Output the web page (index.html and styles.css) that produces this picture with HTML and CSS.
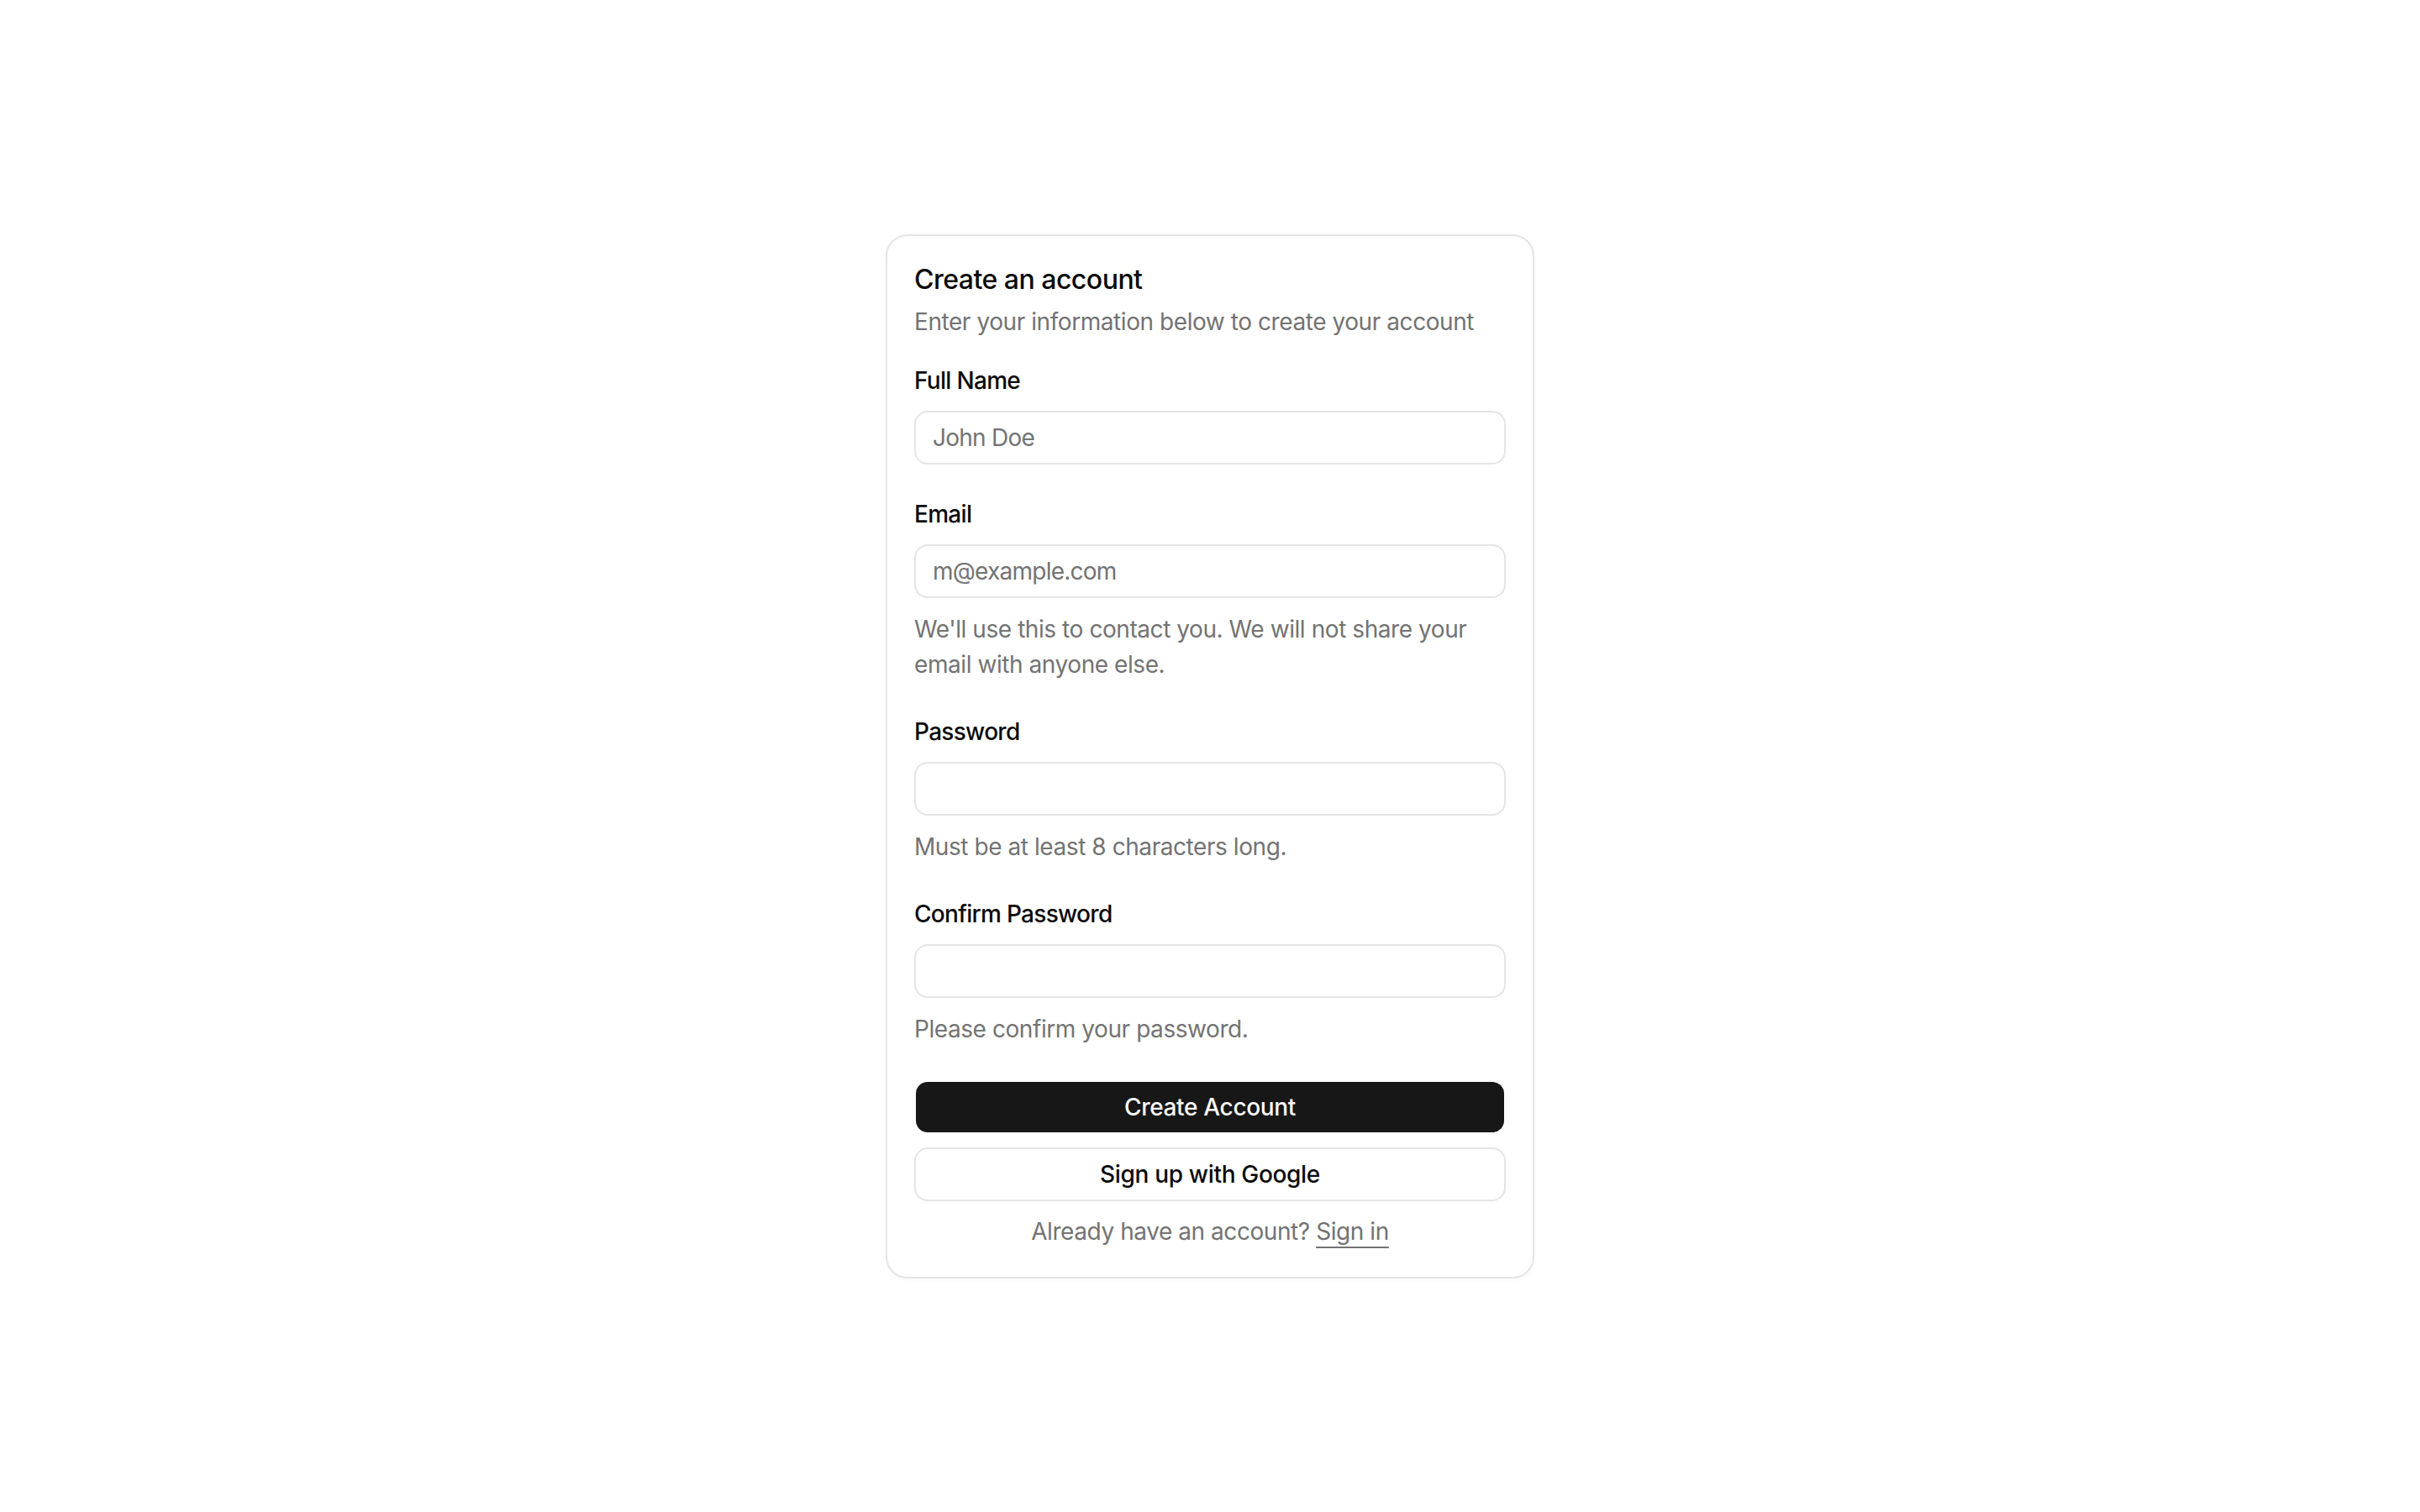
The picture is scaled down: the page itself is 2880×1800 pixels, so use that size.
FILE: index.html
```html
<!DOCTYPE html>
<html lang="en">
<head>
<meta charset="utf-8">
<title>Create an account</title>
<link rel="stylesheet" href="styles.css">
</head>
<body>
<main class="page">
  <section class="card">
    <header class="card-header">
      <h1 class="card-title">Create an account</h1>
      <p class="card-desc">Enter your information below to create your account</p>
    </header>
    <form class="form">
      <div class="field">
        <label class="label" for="name">Full Name</label>
        <input class="input" id="name" type="text" placeholder="John Doe">
      </div>
      <div class="field">
        <label class="label" for="email">Email</label>
        <input class="input" id="email" type="email" placeholder="m@example.com">
        <p class="help">We'll use this to contact you. We will not share your email with anyone else.</p>
      </div>
      <div class="field">
        <label class="label" for="password">Password</label>
        <input class="input" id="password" type="password">
        <p class="help">Must be at least 8 characters long.</p>
      </div>
      <div class="field">
        <label class="label" for="confirm">Confirm Password</label>
        <input class="input" id="confirm" type="password">
        <p class="help">Please confirm your password.</p>
      </div>
      <div class="actions">
        <button class="btn btn-primary" type="button">Create Account</button>
        <button class="btn btn-outline" type="button">Sign up with Google</button>
        <p class="footer-text">Already have an account? <a class="link" href="#">Sign in</a></p>
      </div>
    </form>
  </section>
</main>
</body>
</html>
```

FILE: styles.css
```css
* {
  box-sizing: border-box;
}

html, body {
  margin: 0;
  padding: 0;
  background: #ffffff;
}

body {
  font-family: Inter, "Liberation Sans", Arial, sans-serif;
  color: #0a0a0a;
  letter-spacing: -0.027em;
}

.page {
  min-height: 100vh;
  display: flex;
  align-items: center;
  justify-content: center;
}

.card {
  width: 772px;
  background: #ffffff;
  border: 2px solid #e5e5e5;
  border-radius: 26px;
  padding: 32px 32px 34px;
  box-shadow: 0 2px 4px rgba(0, 0, 0, 0.03);
}

.card-header {
  display: flex;
  flex-direction: column;
  gap: 10px;
}

.card-title {
  margin: 0;
  font-size: 32px;
  line-height: 40px;
  font-weight: 500;
  color: #0a0a0a;
  letter-spacing: -0.016em;
}

.card-desc {
  margin: 0;
  font-size: 28px;
  line-height: 40px;
  color: #737373;
}

.form {
  margin-top: 30px;
  display: flex;
  flex-direction: column;
  gap: 39px;
}

.field {
  display: flex;
  flex-direction: column;
  gap: 16px;
}

.label {
  font-size: 28px;
  line-height: 40px;
  font-weight: 500;
  color: #0a0a0a;
  letter-spacing: -0.025em;
}

.input {
  height: 64px;
  width: 100%;
  border: 2px solid #e5e5e5;
  border-radius: 16px;
  padding: 0 20px;
  font-family: inherit;
  font-size: 28px;
  letter-spacing: -0.027em;
  color: #0a0a0a;
  background: transparent;
  outline: none;
}

.input::placeholder {
  color: #737373;
}

.help {
  margin: 0;
  font-size: 28px;
  line-height: 42px;
  color: #737373;
}

.actions {
  margin-top: 1px;
  display: flex;
  flex-direction: column;
  gap: 16px;
}

.btn {
  height: 64px;
  width: 100%;
  border-radius: 16px;
  font-family: inherit;
  font-size: 28px;
  font-weight: 500;
  letter-spacing: -0.012em;
  cursor: pointer;
}

.btn-primary {
  background: #171717;
  color: #fafafa;
  border: 2px solid transparent;
  background-clip: padding-box;
}

.btn-outline {
  background: #ffffff;
  color: #0a0a0a;
  border: 2px solid #e5e5e5;
}

.footer-text {
  margin: 0;
  text-align: center;
  font-size: 28px;
  line-height: 40px;
  color: #737373;
}

.link {
  color: #737373;
  text-decoration: underline;
  text-decoration-thickness: 2px;
  text-underline-offset: 8px;
}
```
